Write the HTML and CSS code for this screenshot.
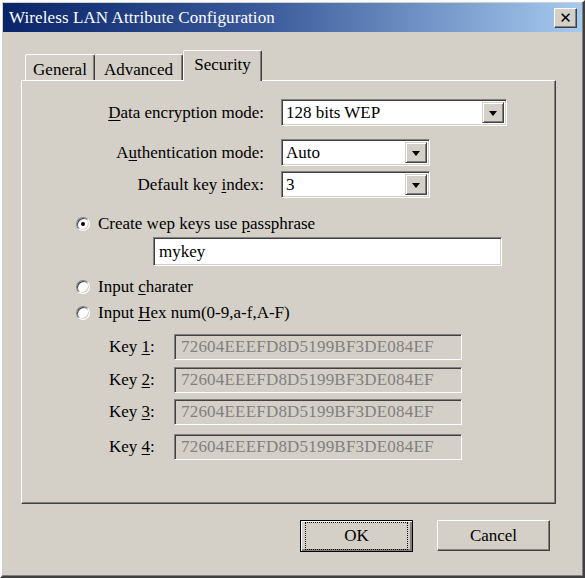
FILE: index.html
```html
<!DOCTYPE html>
<html lang="en">
<head>
    <meta charset="UTF-8">
    <title>Wireless LAN Attribute Configuration</title>
    <link rel="stylesheet" href="styles.css">
</head>
<body>
<div class="window">
    <div class="titlebar">
        <span class="title">Wireless LAN Attribute Configuration</span>
        <span class="close">&#x2715;</span>
    </div>
    <div class="content">
        <div class="tabs">
            <span class="tab tab_general">General</span>
            <span class="tab tab_advanced">Advanced</span>
            <span class="tab tab_security active">Security</span>
        </div>
        <div class="panel">
            <div class="form_grid">
                <label class="lbl"><u>D</u>ata encryption mode:</label>
                <div class="select wide"><span class="val">128 bits WEP</span><span class="arrow"></span></div>
                <label class="lbl row2">A<u>u</u>thentication mode:</label>
                <div class="select row2"><span class="val">Auto</span><span class="arrow"></span></div>
                <label class="lbl row3">Default key <u>i</u>ndex:</label>
                <div class="select row3"><span class="val">3</span><span class="arrow"></span></div>
            </div>
            <div class="radio_row first"><span class="radio checked"></span><span>Create wep keys use <u>p</u>assphrase</span></div>
            <div class="field passphrase">mykey</div>
            <div class="radio_row second"><span class="radio"></span><span>Input <u>c</u>harater</span></div>
            <div class="radio_row third"><span class="radio"></span><span>Input <u>H</u>ex num(0-9,a-f,A-F)</span></div>
            <div class="key_row k1"><span class="key_lbl">Key <u>1</u>:</span><div class="field key">72604EEEFD8D5199BF3DE084EF</div></div>
            <div class="key_row k2"><span class="key_lbl">Key <u>2</u>:</span><div class="field key">72604EEEFD8D5199BF3DE084EF</div></div>
            <div class="key_row k3"><span class="key_lbl">Key <u>3</u>:</span><div class="field key">72604EEEFD8D5199BF3DE084EF</div></div>
            <div class="key_row k4"><span class="key_lbl">Key <u>4</u>:</span><div class="field key">72604EEEFD8D5199BF3DE084EF</div></div>
        </div>
        <div class="buttons">
            <span class="btn default"><span class="focus">OK</span></span>
            <span class="btn">Cancel</span>
        </div>
    </div>
</div>
</body>
</html>
```

FILE: styles.css
```css
*{box-sizing:border-box;}
html,body{margin:0;padding:0;}
body{background:#d4d0c8;font-family:"Liberation Serif","Times New Roman",serif;font-size:17px;color:#000;}
u{text-decoration:underline;text-underline-offset:2px;}

.window{width:585px;height:578px;padding:1px;background:#d4d0c8;
    border-top:2px solid #fff;border-left:2px solid #fff;
    border-right:2px solid #404040;border-bottom:2px solid #404040;
    box-shadow:inset -1px -1px 0 #808080;}

.titlebar{height:29px;display:flex;align-items:center;padding:0 5px 0 6px;
    background:linear-gradient(to right,#0a246a 0%,#3a5a9a 45%,#a6caf0 100%);}
.title{color:#fff;font-size:17px;letter-spacing:0.1px;}
.close{margin-left:auto;width:23px;height:20px;background:#d4d0c8;display:flex;align-items:center;justify-content:center;
    font-family:"DejaVu Sans",sans-serif;font-size:15px;font-weight:bold;color:#000;
    border-top:1px solid #fff;border-left:1px solid #fff;border-right:1px solid #404040;border-bottom:1px solid #404040;
    box-shadow:inset -1px -1px 0 #808080;}

.content{padding:18px 26px 0 18px;}

.tabs{display:flex;align-items:flex-end;padding-left:4px;height:30px;}
.tab{height:26px;padding-top:5px;text-align:center;background:#d4d0c8;
    border-top:1px solid #fff;border-left:1px solid #fff;border-right:1px solid #404040;
    border-radius:2px 2px 0 0;box-shadow:inset -1px 0 0 #808080;}
.tab_general{width:70px;}
.tab_advanced{width:88px;border-left:none;}
.tab_security{width:79px;}
.tab.active{height:31px;margin-bottom:-1px;padding-top:4px;position:relative;z-index:1;}

.panel{width:535px;height:424px;padding-top:18px;
    border-top:1px solid #fff;border-left:1px solid #fff;
    border-right:1px solid #404040;border-bottom:1px solid #404040;
    box-shadow:inset -1px -1px 0 #808080;}

.form_grid{display:grid;grid-template-columns:242px 226px;column-gap:17px;align-items:center;}
.lbl{text-align:right;}
.row2{margin-top:13px;}
.row3{margin-top:5px;}

.select,.field{background:#fff;
    border-top:1px solid #808080;border-left:1px solid #808080;
    border-right:1px solid #fff;border-bottom:1px solid #fff;
    box-shadow:inset 1px 1px 0 #404040,inset -1px -1px 0 #d4d0c8;}
.select{height:27px;width:149px;display:flex;align-items:center;padding:2px 2px 2px 4px;}
.select.wide{width:226px;}
.val{flex:1;}
.arrow{width:22px;height:100%;background:#d4d0c8;display:flex;align-items:center;justify-content:center;
    border-top:1px solid #d4d0c8;border-left:1px solid #d4d0c8;border-right:1px solid #404040;border-bottom:1px solid #404040;
    box-shadow:inset 1px 1px 0 #fff,inset -1px -1px 0 #808080;}
.arrow:after{content:"";border-left:4px solid transparent;border-right:4px solid transparent;border-top:5px solid #000;margin-top:1px;}

.radio_row{display:flex;align-items:center;height:20px;padding-left:54px;}
.radio_row.first{margin-top:16px;}
.radio_row.second{margin-top:11px;}
.radio_row.third{margin-top:6px;}
.radio{width:14px;height:14px;border-radius:50%;background:#fff;margin-right:8px;display:flex;align-items:center;justify-content:center;
    border:1px solid;border-color:#808080 #fff #fff #808080;
    box-shadow:inset 1px 1px 0 #404040,inset -1px -1px 0 #d4d0c8;}
.radio.checked:after{content:"";width:4px;height:4px;border-radius:50%;background:#000;}

.field{display:flex;align-items:center;padding-left:5px;}
.passphrase{margin:3px 0 0 131px;width:349px;height:29px;}

.key_row{display:flex;align-items:center;padding-left:87px;}
.key_row.k1{margin-top:11px;}
.key_row.k2{margin-top:7px;}
.key_row.k3{margin-top:6px;}
.key_row.k4{margin-top:9px;}
.key_lbl{width:65px;}
.field.key{width:288px;height:26px;background:#d4d0c8;color:#808080;padding-left:6px;letter-spacing:0.2px;}

.buttons{display:flex;justify-content:flex-end;gap:24px;margin-top:16px;padding-right:6px;}
.btn{width:113px;height:31px;display:flex;align-items:center;justify-content:center;background:#d4d0c8;
    border-top:1px solid #fff;border-left:1px solid #fff;border-right:1px solid #404040;border-bottom:1px solid #404040;
    box-shadow:inset -1px -1px 0 #808080;}
.btn.default{height:32px;border:1px solid #000;padding:1px;
    box-shadow:inset 1px 1px 0 #fff,inset -2px -2px 0 #808080;}
.focus{width:100%;height:100%;margin:3px;border:1px dotted #000;display:flex;align-items:center;justify-content:center;}
```
